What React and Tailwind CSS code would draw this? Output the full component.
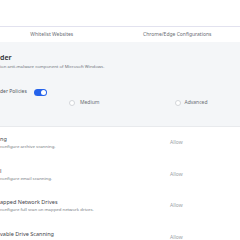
export default function App() {
  const rows = [
    { t: "ng", d: "configure archive scanning." },
    { t: "l", d: "configure email scanning." },
    { t: "apped Network Drives", d: "configure full scan on mapped network drives." },
    { t: "vable Drive Scanning", d: "configure removable drive scanning." },
  ];
  return (
    <div className="w-[240px] h-[240px] overflow-hidden bg-white text-[#3b3f45]" style={{ fontFamily: '"Noto Sans", "Open Sans", sans-serif' }}>
      <div className="h-[26px] bg-white" />
      <div className="border-t border-[#e2e2ef] h-[16px] flex items-center -ml-[11px]">
        <div className="w-[130px] text-center text-[5px] text-[#6a6e74]">Whitelist Websites</div>
        <div className="w-[130px] text-center text-[5px] text-[#6a6e74]">Chrome/Edge Configurations</div>
      </div>
      <div className="bg-[#f4f6f8] h-[85px] flex flex-col border-b border-[#e8eaed]">
        <div className="mt-[12px] text-[7px] font-semibold leading-[8px] text-[#2a2e33]">der</div>
        <div className="mt-[1px] text-[4.3px] leading-[6px] text-[#70757c]">ion anti-malware component of Microsoft Windows.</div>
        <div className="mt-[19px] flex items-center h-[8px]">
          <span className="text-[5px] text-[#52565c]">der Policies</span>
          <div className="ml-[7px] w-[13px] h-[7px] rounded-full bg-[#2563eb] flex items-center justify-end pr-[1px]">
            <div className="w-[5px] h-[5px] rounded-full bg-white" />
          </div>
        </div>
        <div className="mt-[3px] flex items-center h-[8px]">
          <div className="ml-[69px] w-[6px] h-[6px] rounded-full border border-[#d3d6da] bg-white" />
          <span className="ml-[5px] text-[5px] text-[#6a6e74]">Medium</span>
          <div className="ml-[75px] w-[6px] h-[6px] rounded-full border border-[#d3d6da] bg-white" />
          <span className="ml-[4px] text-[5px] text-[#6a6e74]">Advanced</span>
        </div>
      </div>
      <div className="flex flex-col">
        {rows.map((r, i) => (
          <div key={i} className="h-[31.5px] flex items-center">
            <div className="flex-1 flex flex-col">
              <span className="text-[5.5px] leading-[8px] text-[#3f4348]">{r.t}</span>
              <span className="text-[4.3px] leading-[7px] text-[#777c83]">{r.d}</span>
            </div>
            <span className="w-[70px] text-[5px] text-[#9a9fa5]">Allow</span>
          </div>
        ))}
      </div>
    </div>
  );
}
